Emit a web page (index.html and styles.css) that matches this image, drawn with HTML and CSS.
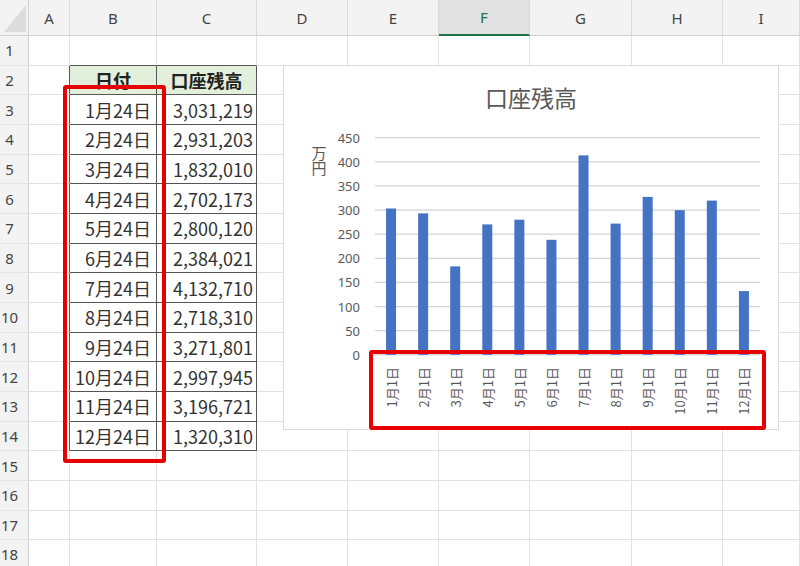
FILE: index.html
```html
<!DOCTYPE html>
<html lang="ja">
<head>
<meta charset="utf-8">
<title>口座残高</title>
<link rel="stylesheet" href="styles.css">
</head>
<body>
<div class="sheet">
  <div class="grid">
    <div class="corner"><span class="tri"></span></div>
    <div class="ch">A</div><div class="ch">B</div><div class="ch">C</div><div class="ch">D</div><div class="ch">E</div><div class="ch sel">F</div><div class="ch">G</div><div class="ch">H</div><div class="ch">I</div>

    <div class="rh">1</div><div class="c"></div><div class="c tb"></div><div class="c tb"></div><div class="c"></div><div class="c"></div><div class="c"></div><div class="c"></div><div class="c"></div><div class="c"></div>
    <div class="rh">2</div><div class="c tl"></div><div class="c tc th">日付</div><div class="c tc th">口座残高</div><div class="c"></div><div class="c"></div><div class="c"></div><div class="c"></div><div class="c"></div><div class="c"></div>
    <div class="rh">3</div><div class="c tl"></div><div class="c tc d1">1月24日</div><div class="c tc d2">3,031,219</div><div class="c"></div><div class="c"></div><div class="c"></div><div class="c"></div><div class="c"></div><div class="c"></div>
    <div class="rh">4</div><div class="c tl"></div><div class="c tc d1">2月24日</div><div class="c tc d2">2,931,203</div><div class="c"></div><div class="c"></div><div class="c"></div><div class="c"></div><div class="c"></div><div class="c"></div>
    <div class="rh">5</div><div class="c tl"></div><div class="c tc d1">3月24日</div><div class="c tc d2">1,832,010</div><div class="c"></div><div class="c"></div><div class="c"></div><div class="c"></div><div class="c"></div><div class="c"></div>
    <div class="rh">6</div><div class="c tl"></div><div class="c tc d1">4月24日</div><div class="c tc d2">2,702,173</div><div class="c"></div><div class="c"></div><div class="c"></div><div class="c"></div><div class="c"></div><div class="c"></div>
    <div class="rh">7</div><div class="c tl"></div><div class="c tc d1">5月24日</div><div class="c tc d2">2,800,120</div><div class="c"></div><div class="c"></div><div class="c"></div><div class="c"></div><div class="c"></div><div class="c"></div>
    <div class="rh">8</div><div class="c tl"></div><div class="c tc d1">6月24日</div><div class="c tc d2">2,384,021</div><div class="c"></div><div class="c"></div><div class="c"></div><div class="c"></div><div class="c"></div><div class="c"></div>
    <div class="rh">9</div><div class="c tl"></div><div class="c tc d1">7月24日</div><div class="c tc d2">4,132,710</div><div class="c"></div><div class="c"></div><div class="c"></div><div class="c"></div><div class="c"></div><div class="c"></div>
    <div class="rh">10</div><div class="c tl"></div><div class="c tc d1">8月24日</div><div class="c tc d2">2,718,310</div><div class="c"></div><div class="c"></div><div class="c"></div><div class="c"></div><div class="c"></div><div class="c"></div>
    <div class="rh">11</div><div class="c tl"></div><div class="c tc d1">9月24日</div><div class="c tc d2">3,271,801</div><div class="c"></div><div class="c"></div><div class="c"></div><div class="c"></div><div class="c"></div><div class="c"></div>
    <div class="rh">12</div><div class="c tl"></div><div class="c tc d1">10月24日</div><div class="c tc d2">2,997,945</div><div class="c"></div><div class="c"></div><div class="c"></div><div class="c"></div><div class="c"></div><div class="c"></div>
    <div class="rh">13</div><div class="c tl"></div><div class="c tc d1">11月24日</div><div class="c tc d2">3,196,721</div><div class="c"></div><div class="c"></div><div class="c"></div><div class="c"></div><div class="c"></div><div class="c"></div>
    <div class="rh">14</div><div class="c tl"></div><div class="c tc d1">12月24日</div><div class="c tc d2">1,320,310</div><div class="c"></div><div class="c"></div><div class="c"></div><div class="c"></div><div class="c"></div><div class="c"></div>
    <div class="rh">15</div><div class="c"></div><div class="c"></div><div class="c"></div><div class="c"></div><div class="c"></div><div class="c"></div><div class="c"></div><div class="c"></div><div class="c"></div>
    <div class="rh">16</div><div class="c"></div><div class="c"></div><div class="c"></div><div class="c"></div><div class="c"></div><div class="c"></div><div class="c"></div><div class="c"></div><div class="c"></div>
    <div class="rh">17</div><div class="c"></div><div class="c"></div><div class="c"></div><div class="c"></div><div class="c"></div><div class="c"></div><div class="c"></div><div class="c"></div><div class="c"></div>
    <div class="rh">18</div><div class="c"></div><div class="c"></div><div class="c"></div><div class="c"></div><div class="c"></div><div class="c"></div><div class="c"></div><div class="c"></div><div class="c"></div>
  </div>

  <div class="chart">
    <svg class="plot" width="494" height="363" viewBox="0 0 494 363">
      <text class="title" x="247" y="31">口座残高</text>
      <text class="unit" x="35" y="80">万円</text>
      <g class="gl">
        <line x1="91" x2="476" y1="71.7" y2="71.7"/>
        <line x1="91" x2="476" y1="95.8" y2="95.8"/>
        <line x1="91" x2="476" y1="119.9" y2="119.9"/>
        <line x1="91" x2="476" y1="144.05" y2="144.05"/>
        <line x1="91" x2="476" y1="168.2" y2="168.2"/>
        <line x1="91" x2="476" y1="192.3" y2="192.3"/>
        <line x1="91" x2="476" y1="216.4" y2="216.4"/>
        <line x1="91" x2="476" y1="240.55" y2="240.55"/>
        <line x1="91" x2="476" y1="264.7" y2="264.7"/>
        <line x1="91" x2="476" y1="288.8" y2="288.8"/>
      </g>
      <g class="yl">
        <text x="76" y="71.7">450</text>
        <text x="76" y="95.8">400</text>
        <text x="76" y="119.9">350</text>
        <text x="76" y="144.05">300</text>
        <text x="76" y="168.2">250</text>
        <text x="76" y="192.3">200</text>
        <text x="76" y="216.4">150</text>
        <text x="76" y="240.55">100</text>
        <text x="76" y="264.7">50</text>
        <text x="76" y="288.8">0</text>
      </g>
      <g class="bars">
        <rect x="102.04" y="142.5" width="10" height="146.3"/>
        <rect x="134.12" y="147.4" width="10" height="141.4"/>
        <rect x="166.2" y="200.4" width="10" height="88.4"/>
        <rect x="198.28" y="158.4" width="10" height="130.4"/>
        <rect x="230.36" y="153.7" width="10" height="135.1"/>
        <rect x="262.44" y="173.8" width="10" height="115"/>
        <rect x="294.52" y="89.4" width="10" height="199.4"/>
        <rect x="326.6" y="157.6" width="10" height="131.2"/>
        <rect x="358.68" y="130.9" width="10" height="157.9"/>
        <rect x="390.76" y="144.2" width="10" height="144.6"/>
        <rect x="422.84" y="134.6" width="10" height="154.2"/>
        <rect x="454.92" y="225.1" width="10" height="63.7"/>
      </g>
      <g class="xl">
        <text transform="translate(107.04 301) rotate(-90)">1月1日</text>
        <text transform="translate(139.12 301) rotate(-90)">2月1日</text>
        <text transform="translate(171.2 301) rotate(-90)">3月1日</text>
        <text transform="translate(203.28 301) rotate(-90)">4月1日</text>
        <text transform="translate(235.36 301) rotate(-90)">5月1日</text>
        <text transform="translate(267.44 301) rotate(-90)">6月1日</text>
        <text transform="translate(299.52 301) rotate(-90)">7月1日</text>
        <text transform="translate(331.6 301) rotate(-90)">8月1日</text>
        <text transform="translate(363.68 301) rotate(-90)">9月1日</text>
        <text transform="translate(395.76 301) rotate(-90)">10月1日</text>
        <text transform="translate(427.84 301) rotate(-90)">11月1日</text>
        <text transform="translate(459.92 301) rotate(-90)">12月1日</text>
      </g>
    </svg>
  </div>

  <div class="mark mark-dates"></div>
  <div class="mark mark-axis"></div>
</div>
</body>
</html>
```

FILE: styles.css
```css
html, body {
  margin: 0;
  padding: 0;
  background: #ffffff;
}

.sheet {
  position: relative;
  width: 800px;
  height: 566px;
  overflow: hidden;
  font-family: "Noto Sans CJK JP", "Noto Sans", sans-serif;
}

.grid {
  display: grid;
  grid-template-columns: 29px 41px 87px 100px 91px 91px 91px 102px 91px 77px;
  grid-template-rows: 36px repeat(18, 29.67px);
}

.grid > div {
  box-sizing: border-box;
  min-width: 0;
}

.corner {
  position: relative;
  background: #f3f3f3;
  border-right: 1px solid #d0d0d0;
  border-bottom: 1px solid #d0d0d0;
}

.tri {
  position: absolute;
  right: 2px;
  bottom: 3px;
  width: 0;
  height: 0;
  border-left: 22px solid transparent;
  border-bottom: 27px solid #dcdcdc;
}

.ch {
  display: flex;
  align-items: center;
  justify-content: center;
  background: #f3f3f3;
  border-right: 1px solid #dadada;
  border-bottom: 1px solid #d0d0d0;
  font-family: "Noto Sans", sans-serif;
  font-size: 15px;
  color: #444444;
}

.ch.sel {
  background: #e1e1e1;
  color: #217346;
  border-bottom: 2px solid #217346;
}

.rh {
  display: flex;
  align-items: center;
  justify-content: center;
  padding-right: 9px;
  background: #f3f3f3;
  border-right: 1px solid #d0d0d0;
  border-bottom: 1px solid #e6e6e6;
  font-family: "Noto Sans", sans-serif;
  font-size: 15px;
  color: #444444;
}

.c {
  border-right: 1px solid #e1e1e1;
  border-bottom: 1px solid #e1e1e1;
  display: flex;
  align-items: center;
  font-size: 18px;
  color: #333333;
  white-space: nowrap;
}

.tb {
  border-bottom-color: #555555;
}

.tl {
  border-right-color: #555555;
}

.tc {
  border-right-color: #555555;
  border-bottom-color: #555555;
}

.th {
  background: #e2efda;
  font-weight: bold;
  justify-content: center;
  color: #222222;
}

.d1 {
  justify-content: flex-end;
  padding-right: 5px;
}

.d2 {
  justify-content: flex-end;
  padding-right: 3px;
}

.chart {
  position: absolute;
  left: 283px;
  top: 65px;
  width: 496px;
  height: 365px;
  box-sizing: border-box;
  border: 1px solid #d9d9d9;
  background: #ffffff;
}

.plot {
  display: block;
}

.title {
  font-family: "Noto Sans CJK JP", sans-serif;
  font-size: 23px;
  fill: #595959;
  text-anchor: middle;
  dominant-baseline: central;
}

.unit {
  font-family: "Noto Sans CJK JP", sans-serif;
  font-size: 15px;
  fill: #595959;
  writing-mode: vertical-rl;
}

.gl line {
  stroke: #d4d4d4;
  stroke-width: 1.2;
}

.yl text {
  font-family: "Noto Sans", sans-serif;
  font-size: 13px;
  fill: #595959;
  text-anchor: end;
  dominant-baseline: central;
}

.bars rect {
  fill: #4472c4;
}

.xl text {
  font-family: "Noto Sans CJK JP", sans-serif;
  font-size: 13px;
  fill: #595959;
  text-anchor: end;
  dominant-baseline: central;
}

.mark {
  position: absolute;
  box-sizing: border-box;
  border: 4px solid #e60000;
  border-radius: 3px;
}

.mark-dates {
  left: 63px;
  top: 85px;
  width: 103px;
  height: 378px;
}

.mark-axis {
  left: 369px;
  top: 350px;
  width: 397px;
  height: 80px;
}
```
